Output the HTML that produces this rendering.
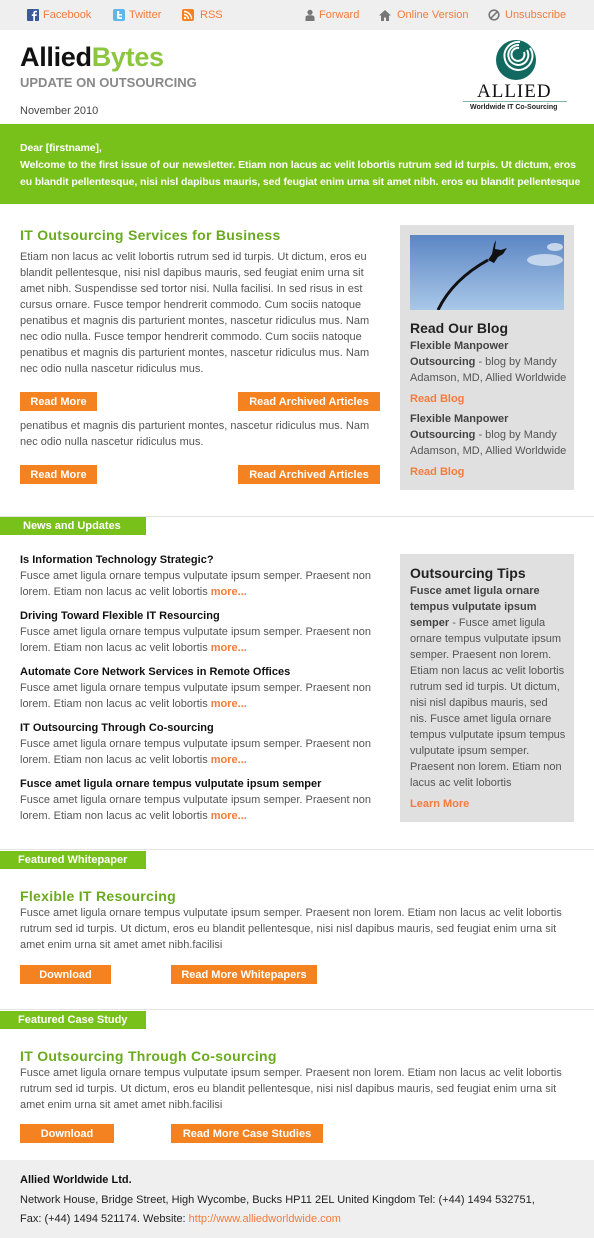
<!DOCTYPE html>
<html><head><meta charset="utf-8"><style>
*{margin:0;padding:0;box-sizing:border-box}
body{width:594px;height:1238px;position:relative;background:#fff;font-family:"Liberation Sans",Arial,sans-serif;font-size:11px;color:#555;overflow:hidden}
.a{position:absolute}
.top{left:0;top:0;width:594px;height:30px;background:#efefef}
.tl{top:8px;font-size:11px;color:#f47b3b;line-height:14px}
.ic{position:absolute;top:9px;width:12px;height:12px}
.p{line-height:16px;color:#555}
.btn{position:absolute;background:#f58220;color:#fff;font-weight:bold;font-size:11px;text-align:center;line-height:20px;height:19px}
.tab{position:absolute;left:0;width:146px;height:18px;background:#78c01a;color:#fff;font-weight:bold;font-size:11px;line-height:18px}
.hr{position:absolute;left:0;width:594px;height:1px;background:#e3e3e3}
.h{color:#6aaa1e;font-weight:bold;font-size:14px;letter-spacing:.3px}
.nt{color:#111;font-weight:bold}
.o{color:#f47b3b;font-weight:bold}
.side{position:absolute;left:400px;width:174px;background:#e0e0e0}
</style></head><body>
<div class="a top"></div>
<svg class="ic" style="left:27px" viewBox="0 0 12 12"><rect width="12" height="12" rx="1" fill="#3b5998"/><path d="M8 12V7h1.6l.3-1.8H8V4.2c0-.5.2-.8.8-.8H10V1.8C9.7 1.8 9.2 1.7 8.6 1.7 7.2 1.7 6.3 2.5 6.3 4v1.2H4.8V7h1.5v5z" fill="#fff"/></svg>
<div class="a tl" style="left:43px">Facebook</div>
<svg class="ic" style="left:113px" viewBox="0 0 12 12"><rect width="12" height="12" rx="2" fill="#5fb7e6"/><path d="M4 2v6.5C4 9.5 4.7 10 5.6 10H9V8.3H6.2V6.6H9V5H6.2V2z" fill="#fff"/></svg>
<div class="a tl" style="left:129px">Twitter</div>
<svg class="ic" style="left:182px" viewBox="0 0 12 12"><rect width="12" height="12" rx="2" fill="#f58220"/><circle cx="3" cy="9" r="1.2" fill="#fff"/><path d="M2 5.5a4.5 4.5 0 0 1 4.5 4.5M2 2.5a7.5 7.5 0 0 1 7.5 7.5" stroke="#fff" stroke-width="1.4" fill="none"/></svg>
<div class="a tl" style="left:200px">RSS</div>
<svg class="ic" style="left:304px" viewBox="0 0 12 12"><circle cx="6" cy="3.3" r="2.6" fill="#777"/><path d="M1.5 12V8.5C1.5 7 3 6.3 6 6.3s4.5.7 4.5 2.2V12z" fill="#777"/></svg>
<div class="a tl" style="left:319px">Forward</div>
<svg class="ic" style="left:379px" viewBox="0 0 12 12"><path d="M6 1L0 6.5h2V12h3V8.5h2V12h3V6.5h2z" fill="#777"/></svg>
<div class="a tl" style="left:397px">Online Version</div>
<svg class="ic" style="left:488px" viewBox="0 0 12 12"><circle cx="6" cy="6" r="4.8" stroke="#777" stroke-width="1.6" fill="none"/><path d="M2.8 9.2L9.2 2.8" stroke="#777" stroke-width="1.6"/></svg>
<div class="a tl" style="left:505px">Unsubscribe</div>

<div class="a" style="left:20px;top:40px;font-size:27px;font-weight:bold;letter-spacing:-.3px;color:#111;line-height:34px">Allied<span style="color:#8cc63f">Bytes</span></div>
<div class="a" style="left:20px;top:75px;font-size:13px;font-weight:bold;color:#888;line-height:15px">UPDATE ON OUTSOURCING</div>
<div class="a" style="left:20px;top:105px;font-size:11px;color:#444">November 2010</div>
<svg class="a" style="left:494px;top:39px" width="44" height="42" viewBox="0 0 44 42"><circle cx="22" cy="21" r="20" fill="#12695f"/><path d="M36 9a14 14 0 1 1-10-6" stroke="#fff" stroke-width="2" fill="none"/><path d="M33 11a10 10 0 1 1-8-5" stroke="#fff" stroke-width="2" fill="none"/><path d="M30 13a6.5 6.5 0 1 1-5-4" stroke="#fff" stroke-width="2" fill="none"/></svg>
<div class="a" style="left:477px;top:82px;font-family:'Liberation Serif',serif;font-size:19px;color:#111;letter-spacing:1px;line-height:19px">ALLIED</div>
<div class="a" style="left:463px;top:101px;width:104px;height:1px;background:#7fb5b0"></div>
<div class="a" style="left:470px;top:104px;font-size:7px;font-weight:bold;color:#222">Worldwide IT Co-Sourcing</div>

<div class="a" style="left:0;top:124px;width:594px;height:80px;background:#78c01a"></div>
<div class="a" style="left:20px;top:140px;width:570px;color:#fff;font-weight:bold;line-height:17px;font-size:10.5px;letter-spacing:-.1px">Dear [firstname],<br>Welcome to the first issue of our newsletter. Etiam non lacus ac velit lobortis rutrum sed id turpis. Ut dictum, eros<br>eu blandit pellentesque, nisi nisl dapibus mauris, sed feugiat enim urna sit amet nibh. eros eu blandit pellentesque</div>

<div class="a h" style="left:20px;top:227px">IT Outsourcing Services for Business</div>
<div class="a p" style="left:20px;top:249px;width:355px">Etiam non lacus ac velit lobortis rutrum sed id turpis. Ut dictum, eros eu blandit pellentesque, nisi nisl dapibus mauris, sed feugiat enim urna sit amet nibh. Suspendisse sed tortor nisi. Nulla facilisi. In sed risus in est cursus ornare. Fusce tempor hendrerit commodo. Cum sociis natoque penatibus et magnis dis parturient montes, nascetur ridiculus mus. Nam nec odio nulla. Fusce tempor hendrerit commodo. Cum sociis natoque penatibus et magnis dis parturient montes, nascetur ridiculus mus. Nam nec odio nulla nascetur ridiculus mus.</div>
<div class="btn" style="left:20px;top:392px;width:77px">Read More</div>
<div class="btn" style="left:238px;top:392px;width:142px">Read Archived Articles</div>
<div class="a p" style="left:20px;top:418px;width:360px">penatibus et magnis dis parturient montes, nascetur ridiculus mus. Nam nec odio nulla nascetur ridiculus mus.</div>
<div class="btn" style="left:20px;top:465px;width:77px">Read More</div>
<div class="btn" style="left:238px;top:465px;width:142px">Read Archived Articles</div>

<div class="side" style="top:225px;height:265px"></div>
<svg class="a" style="left:410px;top:235px" width="154" height="75" viewBox="0 0 154 75"><defs><linearGradient id="g" x1="0" y1="0" x2="0" y2="1"><stop offset="0" stop-color="#5b86c4"/><stop offset="1" stop-color="#a9c8e8"/></linearGradient></defs><rect width="154" height="75" fill="url(#g)"/><ellipse cx="135" cy="25" rx="18" ry="6" fill="#e6eef8" opacity=".7"/><ellipse cx="145" cy="12" rx="8" ry="4" fill="#eef3fa" opacity=".7"/><path d="M28 75C40 50 60 35 78 25" stroke="#111" stroke-width="3" fill="none"/><path d="M78 25l4-6 2-10 2-4-1 9 6 1 6-2-4 6-5 3-4 6z" fill="#111"/></svg>
<div class="a" style="left:410px;top:320px;font-size:14px;font-weight:bold;color:#222">Read Our Blog</div>
<div class="a p" style="left:410px;top:338px;width:160px"><b style="color:#444">Flexible Manpower Outsourcing</b> - blog by Mandy Adamson, MD, Allied Worldwide</div>
<div class="a o" style="left:410px;top:392px;line-height:14px">Read Blog</div>
<div class="a p" style="left:410px;top:411px;width:160px"><b style="color:#444">Flexible Manpower Outsourcing</b> - blog by Mandy Adamson, MD, Allied Worldwide</div>
<div class="a o" style="left:410px;top:465px;line-height:14px">Read Blog</div>

<div class="hr" style="top:516px"></div>
<div class="tab" style="top:517px;padding-left:23px">News and Updates</div>

<div class="a p" style="left:20px;top:552px;width:360px">
<div class="nt">Is Information Technology Strategic?</div>Fusce amet ligula ornare tempus vulputate ipsum semper. Praesent non lorem. Etiam non lacus ac velit lobortis <span class="o">more...</span>
<div class="nt" style="margin-top:8px">Driving Toward Flexible IT Resourcing</div>Fusce amet ligula ornare tempus vulputate ipsum semper. Praesent non lorem. Etiam non lacus ac velit lobortis <span class="o">more...</span>
<div class="nt" style="margin-top:8px">Automate Core Network Services in Remote Offices</div>Fusce amet ligula ornare tempus vulputate ipsum semper. Praesent non lorem. Etiam non lacus ac velit lobortis <span class="o">more...</span>
<div class="nt" style="margin-top:8px">IT Outsourcing Through Co-sourcing</div>Fusce amet ligula ornare tempus vulputate ipsum semper. Praesent non lorem. Etiam non lacus ac velit lobortis <span class="o">more...</span>
<div class="nt" style="margin-top:8px">Fusce amet ligula ornare tempus vulputate ipsum semper</div>Fusce amet ligula ornare tempus vulputate ipsum semper. Praesent non lorem. Etiam non lacus ac velit lobortis <span class="o">more...</span>
</div>

<div class="side" style="top:554px;height:268px"></div>
<div class="a" style="left:410px;top:565px;font-size:14px;font-weight:bold;color:#222">Outsourcing Tips</div>
<div class="a p" style="left:410px;top:583px;width:158px">
<b style="color:#444">Fusce amet ligula ornare<br>tempus vulputate ipsum<br>semper</b> - Fusce amet ligula<br>ornare tempus vulputate ipsum<br>semper. Praesent non lorem.<br>Etiam non lacus ac velit lobortis<br>rutrum sed id turpis. Ut dictum,<br>nisi nisl dapibus mauris, sed<br>nis. Fusce amet ligula ornare<br>tempus vulputate ipsum tempus<br>vulputate ipsum semper.<br>Praesent non lorem. Etiam non<br>lacus ac velit lobortis</div>
<div class="a o" style="left:410px;top:797px;line-height:14px">Learn More</div>

<div class="hr" style="top:849px"></div>
<div class="tab" style="top:851px;padding-left:18px">Featured Whitepaper</div>
<div class="a h" style="left:20px;top:888px">Flexible IT Resourcing</div>
<div class="a p" style="left:20px;top:905px;width:560px">Fusce amet ligula ornare tempus vulputate ipsum semper. Praesent non lorem. Etiam non lacus ac velit lobortis rutrum sed id turpis. Ut dictum, eros eu blandit pellentesque, nisi nisl dapibus mauris, sed feugiat enim urna sit amet enim urna sit amet amet nibh.facilisi</div>
<div class="btn" style="left:20px;top:965px;width:91px">Download</div>
<div class="btn" style="left:171px;top:965px;width:146px">Read More Whitepapers</div>

<div class="hr" style="top:1009px"></div>
<div class="tab" style="top:1011px;padding-left:18px">Featured Case Study</div>
<div class="a h" style="left:20px;top:1048px">IT Outsourcing Through Co-sourcing</div>
<div class="a p" style="left:20px;top:1065px;width:560px">Fusce amet ligula ornare tempus vulputate ipsum semper. Praesent non lorem. Etiam non lacus ac velit lobortis rutrum sed id turpis. Ut dictum, eros eu blandit pellentesque, nisi nisl dapibus mauris, sed feugiat enim urna sit amet enim urna sit amet amet nibh.facilisi</div>
<div class="btn" style="left:20px;top:1124px;width:94px">Download</div>
<div class="btn" style="left:171px;top:1124px;width:152px">Read More Case Studies</div>

<div class="a" style="left:0;top:1160px;width:594px;height:78px;background:#efefef"></div>
<div class="a" style="left:20px;top:1173px;color:#111;font-weight:bold;line-height:14px">Allied Worldwide Ltd.</div>
<div class="a" style="left:20px;top:1191px;width:570px;color:#222;line-height:19px">Network House, Bridge Street, High Wycombe, Bucks HP11 2EL United Kingdom Tel: (+44) 1494 532751,<br>Fax: (+44) 1494 521174. Website: <span style="color:#f47b3b">http://www.alliedworldwide.com</span></div>
</body></html>
